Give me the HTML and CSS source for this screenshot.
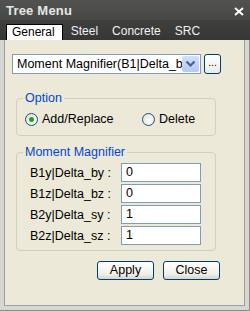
FILE: index.html
```html
<!DOCTYPE html>
<html>
<head>
<meta charset="utf-8">
<link rel="stylesheet" href="styles.css">
</head>
<body>
<div class="window">
  <div class="titlebar">
    <span class="title">Tree Menu</span>
    <svg class="close" width="10" height="9" viewBox="0 0 10 9"><path d="M1 1 L9 8 M9 1 L1 8" stroke="#fff" stroke-width="2"/></svg>
  </div>
  <div class="tabs">
    <span class="tab active">General</span>
    <span class="tab">Steel</span>
    <span class="tab">Concrete</span>
    <span class="tab">SRC</span>
  </div>
  <div class="frame">
    <div class="panel">
      <div class="selrow">
        <div class="select">
          <span class="seltext">Moment Magnifier(B1|Delta_b</span>
          <span class="selbtn"><svg width="11" height="8" viewBox="0 0 11 8"><path d="M1.5 1.5 L5.5 5.5 L9.5 1.5" fill="none" stroke="#4d6185" stroke-width="2.2"/></svg></span>
        </div>
        <div class="dots">...</div>
      </div>
      <fieldset class="group option">
        <legend>Option</legend>
        <div class="radios">
          <label class="radio"><span class="rb checked"></span>Add/Replace</label>
          <label class="radio"><span class="rb"></span>Delete</label>
        </div>
      </fieldset>
      <fieldset class="group mm">
        <legend>Moment Magnifier</legend>
        <div class="field"><span class="lbl">B1y|Delta_by :</span><span class="inp">0</span></div>
        <div class="field"><span class="lbl">B1z|Delta_bz :</span><span class="inp">0</span></div>
        <div class="field"><span class="lbl">B2y|Delta_sy :</span><span class="inp">1</span></div>
        <div class="field"><span class="lbl">B2z|Delta_sz :</span><span class="inp">1</span></div>
      </fieldset>
      <div class="buttons">
        <span class="btn">Apply</span>
        <span class="btn">Close</span>
      </div>
    </div>
  </div>
</div>
</body>
</html>
```
FILE: styles.css
```css
html, body { margin: 0; padding: 0; }
body { background: #fff; font-family: "Liberation Sans", Arial, sans-serif; font-size: 12.5px; color: #000; }
.window { width: 250px; height: 311px; display: flex; flex-direction: column; background: #3c3c3c; }
.titlebar { height: 20px; background: linear-gradient(#525250, #474745); display: flex; align-items: center; justify-content: space-between; padding: 0 6px 0 6px; }
.title { color: #e6e6e6; font-weight: bold; font-size: 13px; letter-spacing: 0.2px; }
.close { margin-top: 3px; }
.tabs { height: 20px; background: linear-gradient(#3f3f3d, #363634); display: flex; align-items: flex-end; padding-left: 6px; }
.tab { color: #f0f0f0; font-size: 12px; padding: 0 6px 0 7px; height: 16px; line-height: 15px; margin-right: 1px; }
.tab.active { background: #fff; color: #000; border: 1px solid #000; border-bottom: none; height: 15px; padding: 0 7px 0 5px; }
.frame { flex: 1; background: #d6d6d2; padding: 0 4px 0 4px; border-right: 1px solid #8a8a88; border-bottom: 1px solid #8a8a88; display: flex; flex-direction: column; }
.panel { flex: 1; background: #ece9d8; border-left: 1px solid #a0a0a0; border-right: 1px solid #a0a0a0; border-bottom: 1px solid #a0a0a0; margin-bottom: 4px; padding: 14px 0 0 7px; }
.selrow { display: flex; align-items: center; gap: 3px; }
.select { width: 187px; height: 18px; border: 1px solid #7f9db9; background: #fff; display: flex; align-items: center; }
.seltext { flex: 1; padding-left: 4px; white-space: nowrap; overflow: hidden; }
.selbtn { width: 17px; height: 16px; margin-right: 1px; background: linear-gradient(#d2e0fd, #b3c9f7); border-radius: 2px; display: flex; align-items: center; justify-content: center; }
.dots { width: 15px; height: 18px; border: 1px solid #003c74; border-radius: 3px; background: linear-gradient(#fff, #ecebe6); font-size: 10px; line-height: 16px; text-align: center; }
.group { border: 1px solid #d0d0bf; border-radius: 4px; margin: 0 0 0 4px; padding: 0; width: 200px; box-sizing: border-box; }
.group legend { color: #0046d5; padding: 0 2px; margin-left: 6px; }
.option { margin-top: 17px; height: 45px; }
.radios { display: flex; padding: 7px 0 0 8px; }
.radio { display: flex; align-items: center; gap: 4px; }
.radio:first-child { width: 117px; }
.rb { width: 11px; height: 11px; border: 1px solid #1c5180; border-radius: 50%; background: radial-gradient(circle at 60% 60%, #fff, #dcd9cc); display: inline-block; position: relative; }
.rb.checked::after { content: ""; position: absolute; left: 3px; top: 3px; width: 5px; height: 5px; border-radius: 50%; background: #21a121; }
.mm { margin-top: 9px; height: 106px; padding-top: 4px; }
.field { display: flex; align-items: center; margin-bottom: 2px; padding-left: 13px; }
.lbl { width: 91px; white-space: nowrap; }
.inp { width: 74px; height: 17px; border: 1px solid #7f9db9; background: #fff; padding-left: 4px; line-height: 17px; }
.buttons { display: flex; justify-content: flex-end; gap: 9px; width: 208px; margin-top: 10px; }
.btn { width: 55px; height: 17px; border: 1px solid #003c74; border-radius: 3px; background: linear-gradient(#fff, #f0f0ea 70%, #d8d5c8); text-align: center; line-height: 17px; }
```
